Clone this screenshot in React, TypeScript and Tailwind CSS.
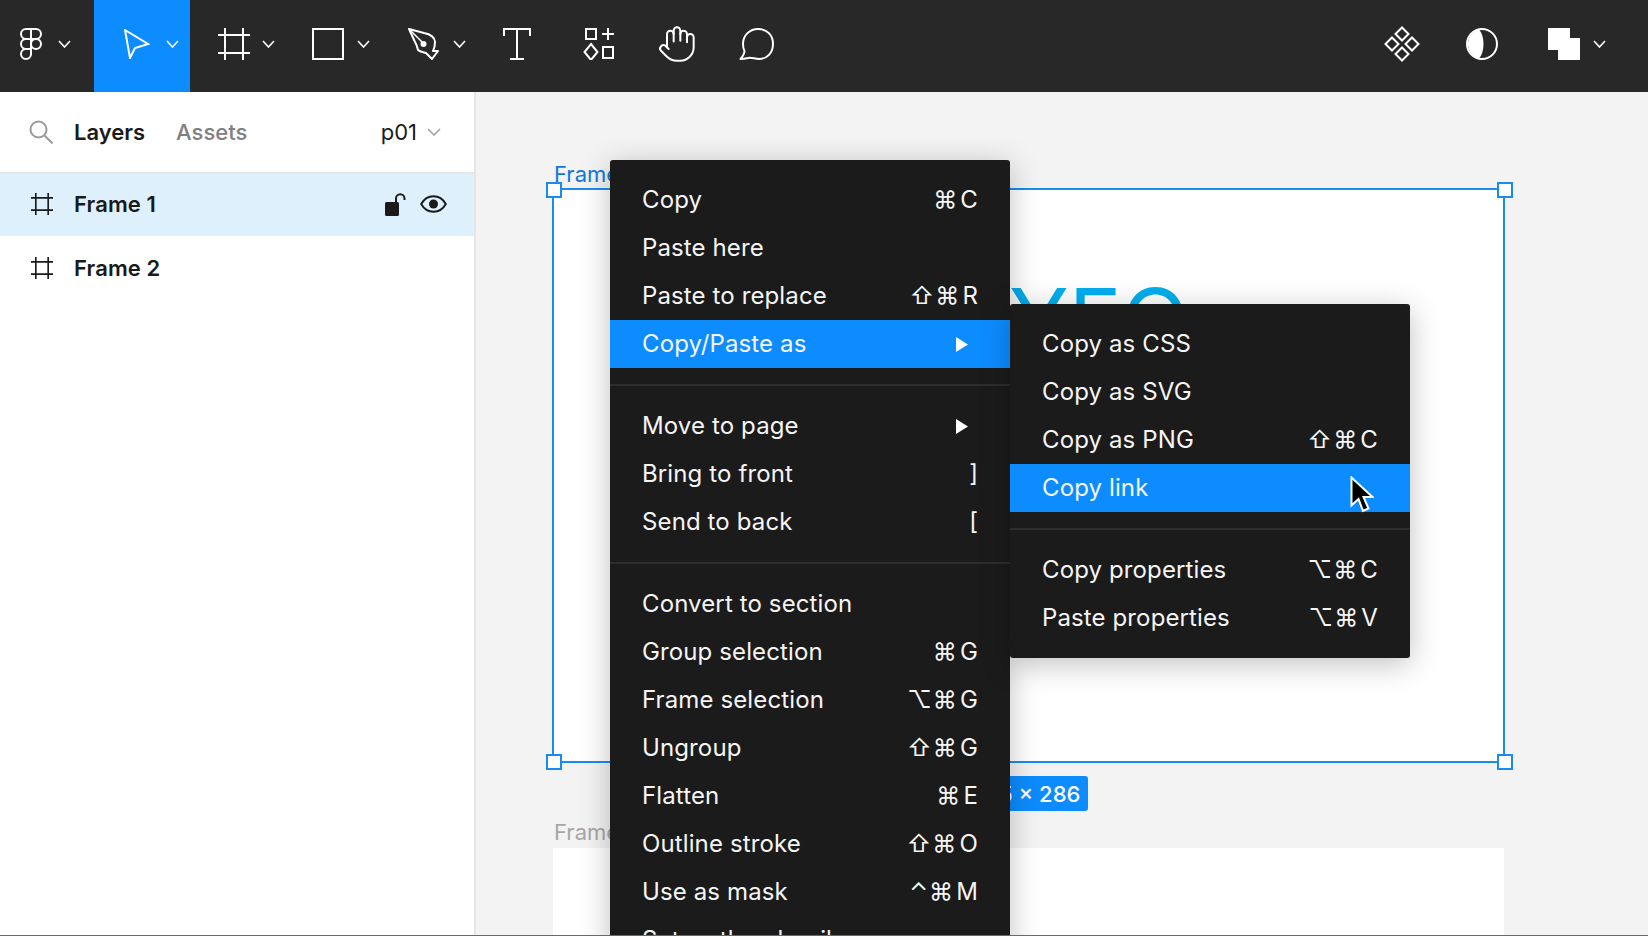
import { Hand } from 'lucide-react';

const Chevron = ({ className = '' }: { className?: string }) => (
    <svg width="13" height="8" viewBox="0 0 13 8" fill="none" stroke="#fff" strokeWidth="1.6" className={className}>
        <path d="M1 1l5.5 6L12 1" />
    </svg>
);

const FigmaLogo = () => (
    <svg width="22" height="32" viewBox="0 0 22 32" fill="none" stroke="#fff" strokeWidth="2">
        <path d="M11 1H6a5 5 0 0 0 0 10h5z" />
        <path d="M11 1h5a5 5 0 0 1 0 10h-5z" />
        <path d="M11 11H6a5 5 0 0 0 0 10h5z" />
        <circle cx="16" cy="16" r="5" />
        <path d="M11 21H6a5 5 0 1 0 5 5z" />
    </svg>
);

const MoveIcon = () => (
    <svg width="26" height="30" viewBox="0 0 26 30" fill="none" stroke="#fff" strokeWidth="2" strokeLinejoin="miter">
        <path d="M1 1l23 14-13 4-5 10z" />
    </svg>
);

const FrameIcon = ({ size = 32, color = '#fff', width = 2 }: any) => (
    <svg width={size} height={size} viewBox="0 0 32 32" fill="none" stroke={color} strokeWidth={width}>
        <path d="M7 0v32M25 0v32M0 7h32M0 25h32" />
    </svg>
);

const RectIcon = () => (
    <svg width="32" height="32" viewBox="0 0 32 32" fill="none" stroke="#fff" strokeWidth="2">
        <rect x="1" y="1" width="30" height="30" />
    </svg>
);

const PenIcon = () => (
    <svg width="32" height="32" viewBox="0 0 32 32" fill="none" stroke="#fff" strokeWidth="2" strokeLinejoin="round">
        <path d="M1 1l15 4c7 1 11 5 11 9 0 4-1 7-2 9l5 0-6 8-6-6c-3-1-6-1-8-3-1-3-1-5-3-8z" />
        <path d="M1 1l14 14" strokeWidth="1.6" />
        <circle cx="15.5" cy="16" r="3" fill="#fff" stroke="none" />
    </svg>
);

const TextIcon = () => (
    <svg width="28" height="32" viewBox="0 0 28 32" fill="none" stroke="#fff" strokeWidth="2">
        <path d="M1 8V1h26v7M14 1v30M7 31h14" />
    </svg>
);

const ResourcesIcon = () => (
    <svg width="32" height="32" viewBox="0 0 32 32" fill="none" stroke="#fff" strokeWidth="2">
        <rect x="3" y="1" width="10" height="10" />
        <path d="M25 0v12M19 6h12" />
        <path d="M8 16l6.5 8L8 32l-6.5-8z" />
        <rect x="20" y="19" width="10" height="11" />
    </svg>
);

const CommentIcon = () => (
    <svg width="36" height="32" viewBox="0 0 36 32" fill="none" stroke="#fff" strokeWidth="2" strokeLinejoin="round">
        <path d="M1.5 31C4 28 5.5 25 5.5 23 4 20.5 4 18 4 16 4 7 11 1 19 1c9 0 15 6 15 15s-6 15-14 15c-4 0-8-2-11-1-2 .5-5 1-7.5 1z" />
    </svg>
);

const ComponentsIcon = () => (
    <svg width="36" height="36" viewBox="0 0 36 36" fill="none" stroke="#fff" strokeWidth="2">
        <path d="M18 1.5L24.5 8 18 14.5 11.5 8z" />
        <path d="M8 11.5L14.5 18 8 24.5 1.5 18z" />
        <path d="M28 11.5L34.5 18 28 24.5 21.5 18z" />
        <path d="M18 21.5L24.5 28 18 34.5 11.5 28z" />
    </svg>
);

const ContrastIcon = () => (
    <svg width="32" height="32" viewBox="0 0 32 32">
        <circle cx="16" cy="16" r="15" fill="none" stroke="#fff" strokeWidth="2" />
        <path d="M13 1.5A15 15 0 0 0 13 30.5C19 24 19 8 13 1.5z" fill="#fff" />
    </svg>
);

const CopiesIcon = () => (
    <svg width="32" height="32" viewBox="0 0 32 32" fill="#fff">
        <rect width="22" height="22" />
        <rect x="10" y="10" width="22" height="22" />
    </svg>
);

const SearchIcon = () => (
    <svg width="24" height="24" viewBox="0 0 24 24" fill="none" stroke="#9a9a9a" strokeWidth="2">
        <circle cx="9.5" cy="9.5" r="8" />
        <path d="M15.5 15.5l8 8" />
    </svg>
);

const LockIcon = () => (
    <svg width="21" height="23" viewBox="0 0 21 23" fill="none">
        <rect x="0" y="9" width="14" height="14" rx="1.5" fill="#1a1a1a" />
        <path d="M11 10V5.5a4 4 0 0 1 8.5 0V7" stroke="#1a1a1a" strokeWidth="2" />
    </svg>
);

const EyeIcon = () => (
    <svg width="27" height="20" viewBox="0 0 27 20" fill="none">
        <path d="M1.2 10C4 5 8 2.2 13.5 2.2S23 5 25.8 10C23 15 19 17.8 13.5 17.8S4 15 1.2 10z" stroke="#1a1a1a" strokeWidth="2" />
        <circle cx="13.5" cy="10" r="4.5" fill="#1a1a1a" />
    </svg>
);

const Cursor = () => (
    <svg width="24" height="37" viewBox="0 0 24 37">
        <path d="M1.5 1.5v28l7-6.5 4.5 12 5.5-2.5-5-11.5h9z" fill="#000" stroke="#fff" strokeWidth="2" />
    </svg>
);

const Triangle = () => (
    <svg width="12" height="15" viewBox="0 0 12 15" fill="#fff" className="mr-[10px]">
        <path d="M0 0l12 7.5L0 15z" />
    </svg>
);

const Shortcut = ({ keys }: { keys: string[] }) => (
    <span className="flex items-center gap-[3px]">
        {keys.map((k, i) => (
            <span key={i} className={keys.length === 3 && i === 0 ? '-mr-[2px]' : ''}>{k}</span>
        ))}
    </span>
);

const MenuRow = ({ label, keys, active, arrow, tail }: any) => (
    <div className={`flex items-center justify-between h-12 px-[32px] ${active ? 'bg-[#0d8cff]' : ''}`}>
        <span>{label}</span>
        {keys && <Shortcut keys={keys} />}
        {tail && <span>{tail}</span>}
        {arrow && <Triangle />}
    </div>
);

const Sep = () => <div className="h-[2px] my-4 bg-[#2e2e2e]" />;

const Handle = ({ className }: { className: string }) => (
    <div className={`absolute w-4 h-4 bg-white border-2 border-[#1a8cf0] ${className}`} />
);

const ToolCell = ({ w, pl, children, chevronGap, active }: any) => (
    <div className={`flex items-center shrink-0 h-full pb-[4px] ${w} ${pl} ${active ? 'bg-[#0d8cff]' : ''}`}>
        {children}
        {chevronGap && <Chevron className={chevronGap} />}
    </div>
);

const LayerRow = ({ name, selected, height }: { name: string; selected?: boolean; height: string }) => (
    <div className={`flex items-center pl-[31px] pr-[27px] pb-[2px] ${height} ${selected ? 'bg-[#dff0fd]' : ''}`}>
        <FrameIcon size={22} color="#1a1a1a" width={2.4} />
        <span className="ml-[21px] text-[22px] tracking-[0.005em] font-semibold text-[#1a1a1a]">{name}</span>
        {selected && (
            <div className="ml-auto flex items-center gap-[14px]">
                <LockIcon />
                <EyeIcon />
            </div>
        )}
    </div>
);

export default function App() {
    return (
        <div className="w-[1648px] h-[936px] flex flex-col overflow-hidden bg-white font-['Inter',sans-serif]">
            <div className="flex h-[92px] shrink-0 bg-[#282828]">
                <ToolCell w="w-[94px]" pl="pl-[20px]" chevronGap="ml-[16px]"><FigmaLogo /></ToolCell>
                <ToolCell w="w-[96px]" pl="pl-[30px]" chevronGap="ml-[16px]" active><MoveIcon /></ToolCell>
                <ToolCell w="w-[94px]" pl="pl-[28px]" chevronGap="ml-[12px]"><FrameIcon /></ToolCell>
                <ToolCell w="w-[96px]" pl="pl-[28px]" chevronGap="ml-[13px]"><RectIcon /></ToolCell>
                <ToolCell w="w-[96px]" pl="pl-[28px]" chevronGap="ml-[13px]"><PenIcon /></ToolCell>
                <ToolCell w="w-[80px]" pl="pl-[27px]"><TextIcon /></ToolCell>
                <ToolCell w="w-[76px]" pl="pl-[27px]"><ResourcesIcon /></ToolCell>
                <ToolCell w="w-[80px]" pl="pl-[25px]"><Hand size={40} color="#fff" strokeWidth={1.2} /></ToolCell>
                <ToolCell w="w-[64px]" pl="pl-[27px]"><CommentIcon /></ToolCell>
                <div className="ml-auto flex items-center pr-[42px] pb-[4px]">
                    <ComponentsIcon />
                    <div className="ml-[46px]"><ContrastIcon /></div>
                    <div className="ml-[50px]"><CopiesIcon /></div>
                    <Chevron className="ml-[13px]" />
                </div>
            </div>

            <div className="flex flex-1 min-h-0">
                <div className="w-[476px] shrink-0 bg-white border-r-2 border-[#e6e6e6]">
                    <div className="flex items-center h-[82px] pl-[29px] pr-[33px] border-b-2 border-[#e6e6e6] text-[22px]">
                        <SearchIcon />
                        <span className="ml-[21px] font-semibold text-[#1a1a1a]">Layers</span>
                        <span className="ml-[31px] font-medium text-[#808080]">Assets</span>
                        <span className="ml-auto text-[#1a1a1a]">p01</span>
                        <svg width="14" height="8" viewBox="0 0 14 8" fill="none" stroke="#a0a0a0" strokeWidth="1.5" className="ml-[10px]">
                            <path d="M1 1l6 6 6-6" />
                        </svg>
                    </div>
                    <LayerRow name="Frame 1" selected height="h-[62px]" />
                    <LayerRow name="Frame 2" height="h-[66px]" />
                </div>

                <div className="relative flex-1 bg-[#f3f3f3] overflow-hidden">
                    <span className="absolute left-[78px] top-[68px] text-[22px] leading-7 text-[#0f78dc]">Frame 1</span>
                    <div className="absolute left-[76px] top-[96px] w-[953px] h-[575px] bg-white border-2 border-[#1a8cf0]">
                        <span className="absolute right-[314px] top-[77px] text-[88px] leading-[106px] font-normal text-[#00aeef]">YEO</span>
                    </div>
                    <Handle className="left-[70px] top-[90px]" />
                    <Handle className="left-[1021px] top-[90px]" />
                    <Handle className="left-[70px] top-[662px]" />
                    <Handle className="left-[1021px] top-[662px]" />
                    <div className="absolute left-[494px] top-[684px] w-[118px] h-[35px] pr-[6px] pt-[1px] rounded-[3px] bg-[#0d8cff] flex items-center justify-center text-[22px] font-medium text-white">
                        955 × 286
                    </div>
                    <span className="absolute left-[78px] top-[726px] text-[22px] leading-7 text-[#a6a6a6]">Frame 2</span>
                    <div className="absolute left-[77px] top-[756px] w-[951px] h-[100px] bg-white" />

                    <div className="absolute left-[134px] top-[68px] w-[400px] pt-[16px] pb-[15px] rounded-[3px] bg-[#1b1b1b] text-[24px] tracking-[0.005em] text-[#f5f5f5] shadow-[0_6px_30px_rgba(0,0,0,0.25)]">
                        <MenuRow label="Copy" keys={['⌘', 'C']} />
                        <MenuRow label="Paste here" />
                        <MenuRow label="Paste to replace" keys={['⇧', '⌘', 'R']} />
                        <MenuRow label="Copy/Paste as" active arrow />
                        <Sep />
                        <MenuRow label="Move to page" arrow />
                        <MenuRow label="Bring to front" tail="]" />
                        <MenuRow label="Send to back" tail="[" />
                        <Sep />
                        <MenuRow label="Convert to section" />
                        <MenuRow label="Group selection" keys={['⌘', 'G']} />
                        <MenuRow label="Frame selection" keys={['⌥', '⌘', 'G']} />
                        <MenuRow label="Ungroup" keys={['⇧', '⌘', 'G']} />
                        <MenuRow label="Flatten" keys={['⌘', 'E']} />
                        <MenuRow label="Outline stroke" keys={['⇧', '⌘', 'O']} />
                        <MenuRow label="Use as mask" keys={['⌃', '⌘', 'M']} />
                        <MenuRow label="Set as thumbnail" />
                    </div>

                    <div className="absolute left-[534px] top-[212px] w-[400px] pt-[16px] pb-[16px] rounded-[3px] bg-[#1b1b1b] text-[24px] tracking-[0.005em] text-[#f5f5f5] shadow-[0_6px_30px_rgba(0,0,0,0.25)]">
                        <MenuRow label="Copy as CSS" />
                        <MenuRow label="Copy as SVG" />
                        <MenuRow label="Copy as PNG" keys={['⇧', '⌘', 'C']} />
                        <MenuRow label="Copy link" active />
                        <Sep />
                        <MenuRow label="Copy properties" keys={['⌥', '⌘', 'C']} />
                        <MenuRow label="Paste properties" keys={['⌥', '⌘', 'V']} />
                    </div>

                    <div className="absolute left-[874px] top-[384px]">
                        <Cursor />
                    </div>
                </div>
            </div>
            <div className="h-px shrink-0 bg-[#6a6a6a]" />
        </div>
    );
}
